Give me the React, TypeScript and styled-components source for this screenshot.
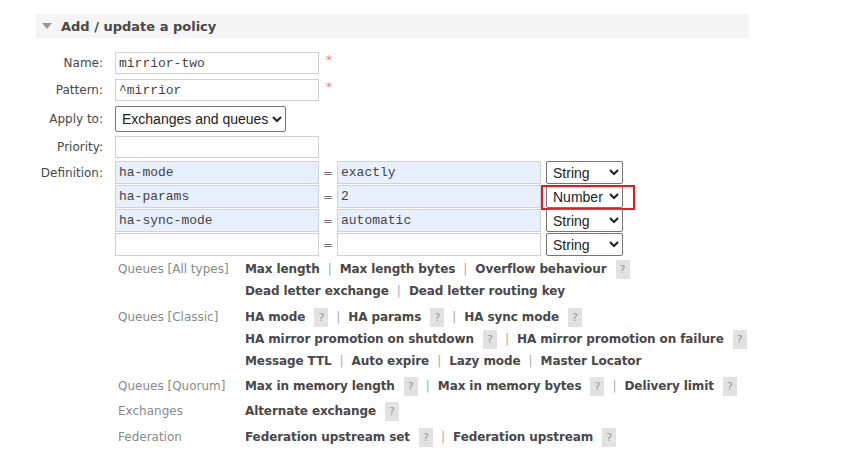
import React from "react";
import styled, { createGlobalStyle } from "styled-components";

const Global = createGlobalStyle`
  html, body { margin: 0; padding: 0; background: #fff; }
  body { font-family: "DejaVu Sans", Verdana, sans-serif; font-size: 12px; color: #484848; }
`;

const Page = styled.div`
  width: 849px;
  height: 450px;
  padding: 14px 0 0 36px;
  box-sizing: border-box;
  overflow: hidden;
`;

const Section = styled.div`
  width: 713px;
`;

const Header = styled.div`
  height: 24px;
  background: #f5f5f5;
  display: flex;
  align-items: center;
  padding-left: 6px;
  gap: 9px;
  font-weight: bold;
  font-size: 13px;
  color: #484848;
`;

const Triangle = styled.span`
  width: 0;
  height: 0;
  border-left: 5px solid transparent;
  border-right: 5px solid transparent;
  border-top: 6px solid #999;
`;

const Form = styled.div`
  display: grid;
  grid-template-columns: 67px auto;
  column-gap: 12px;
  margin-top: 14px;
  align-items: start;
`;

const Label = styled.div<{ $h?: number }>`
  text-align: right;
  height: ${(p) => p.$h ?? 22}px;
  line-height: ${(p) => (p.$h ?? 22) + 1}px;
  font-size: 12px;
  color: #484848;
  white-space: nowrap;
`;

const Field = styled.div<{ $mb?: number }>`
  display: flex;
  align-items: center;
  gap: 6px;
  margin-bottom: ${(p) => p.$mb ?? 5}px;
`;

const TextInput = styled.input<{ $filled?: boolean; $w?: number }>`
  box-sizing: border-box;
  width: ${(p) => p.$w ?? 204}px;
  height: 22px;
  margin: 0;
  padding: 0 3px;
  border: 1px solid ${(p) => (p.$filled ? "#ccd3dd" : "#d0d0d0")};
  background: ${(p) => (p.$filled ? "#e8f0fe" : "#fff")};
  font-family: "Liberation Mono", "Courier New", monospace;
  font-size: 13px;
  color: #444;
  outline: none;
`;

const Star = styled.span`
  color: #f08080;
  font-size: 12px;
  margin-left: 1px;
  align-self: flex-start;
  margin-top: 1px;
`;

const Select = styled.select<{ $w?: number; $h?: number }>`
  box-sizing: border-box;
  width: ${(p) => (p.$w ? `${p.$w}px` : "auto")};
  height: ${(p) => p.$h ?? 23}px;
  margin: 0;
  padding: 0 0 0 2px;
  border: 1px solid #767676;
  border-radius: 2px;
  background: #fff;
  font-family: "Liberation Sans", Arial, sans-serif;
  font-size: 14px;
  color: #222;
`;

const DefRows = styled.div`
  display: flex;
  flex-direction: column;
  gap: 1px;
`;

const DefRow = styled.div`
  display: flex;
  align-items: center;
  height: 23px;
`;

const Eq = styled.span`
  width: 18px;
  text-align: center;
  font-size: 12px;
  color: #777;
`;

const TypeWrap = styled.div`
  position: relative;
  margin-left: 5px;
  display: flex;
`;

const RedBox = styled.div`
  position: absolute;
  left: -5px;
  top: 0px;
  width: 94px;
  height: 25px;
  border: 2px solid #e8191b;
  box-sizing: border-box;
  pointer-events: none;
`;

const Help = styled.div`
  margin: 2px 0 0 82px;
  display: grid;
  grid-template-columns: 127px auto;
  align-items: start;
`;

const Cat = styled.div<{ $mt?: number }>`
  color: #8a8a8a;
  font-size: 12px;
  line-height: 22px;
  margin-top: ${(p) => p.$mt ?? 0}px;
  white-space: nowrap;
`;

const Links = styled.div<{ $mt?: number }>`
  margin-top: ${(p) => p.$mt ?? 0}px;
  display: flex;
  flex-direction: column;
`;

const LinkLine = styled.div`
  display: flex;
  align-items: center;
  height: 22px;
  white-space: nowrap;
`;

const Link = styled.span`
  font-weight: bold;
  color: #484848;
  font-size: 12px;
  letter-spacing: -0.1px;
`;

const Sep = styled.span`
  color: #aaa;
  margin: 0 8px;
`;

const Q = styled.span`
  display: inline-block;
  width: 14px;
  height: 19px;
  line-height: 19px;
  text-align: center;
  background: #e2e2e2;
  color: #999;
  font-size: 11px;
  margin-left: 9px;
`;

type L = { t: string; q?: boolean };

const Line = ({ items }: { items: L[] }) => (
  <LinkLine>
    {items.map((it, i) => (
      <React.Fragment key={i}>
        {i > 0 && <Sep>|</Sep>}
        <Link>{it.t}</Link>
        {it.q && <Q>?</Q>}
      </React.Fragment>
    ))}
  </LinkLine>
);

const defs = [
  { k: "ha-mode", v: "exactly", t: "String" },
  { k: "ha-params", v: "2", t: "Number" },
  { k: "ha-sync-mode", v: "automatic", t: "String" },
  { k: "", v: "", t: "String" },
];

export default function App() {
  return (
    <Page>
      <Global />
      <Section>
        <Header>
          <Triangle />
          <span>Add / update a policy</span>
        </Header>
        <Form>
          <Label>Name:</Label>
          <Field>
            <TextInput $filled={false} defaultValue="mirrior-two" />
            <Star>*</Star>
          </Field>
          <Label>Pattern:</Label>
          <Field>
            <TextInput defaultValue="^mirrior" />
            <Star>*</Star>
          </Field>
          <Label $h={26}>Apply to:</Label>
          <Field $mb={4}>
            <Select $h={26} defaultValue="eq">
              <option value="eq">Exchanges and queues</option>
              <option value="e">Exchanges</option>
              <option value="q">Queues</option>
            </Select>
          </Field>
          <Label>Priority:</Label>
          <Field $mb={3}>
            <TextInput />
          </Field>
          <Label $h={23}>Definition:</Label>
          <DefRows>
            {defs.map((d, i) => (
              <DefRow key={i}>
                <TextInput $filled={!!d.k} defaultValue={d.k} style={{ height: 23 }} />
                <Eq>=</Eq>
                <TextInput $filled={!!d.v} defaultValue={d.v} style={{ height: 23 }} />
                <TypeWrap>
                  <Select $w={77} defaultValue={d.t}>
                    <option>String</option>
                    <option>Number</option>
                    <option>Boolean</option>
                    <option>List</option>
                  </Select>
                  {d.t === "Number" && <RedBox />}
                </TypeWrap>
              </DefRow>
            ))}
          </DefRows>
        </Form>
        <Help>
          <Cat>Queues [All types]</Cat>
          <Links>
            <Line items={[{ t: "Max length" }, { t: "Max length bytes" }, { t: "Overflow behaviour", q: true }]} />
            <Line items={[{ t: "Dead letter exchange" }, { t: "Dead letter routing key" }]} />
          </Links>
          <Cat $mt={4}>Queues [Classic]</Cat>
          <Links $mt={4}>
            <Line items={[{ t: "HA mode", q: true }, { t: "HA params", q: true }, { t: "HA sync mode", q: true }]} />
            <Line items={[{ t: "HA mirror promotion on shutdown", q: true }, { t: "HA mirror promotion on failure", q: true }]} />
            <Line items={[{ t: "Message TTL" }, { t: "Auto expire" }, { t: "Lazy mode" }, { t: "Master Locator" }]} />
          </Links>
          <Cat $mt={3}>Queues [Quorum]</Cat>
          <Links $mt={3}>
            <Line items={[{ t: "Max in memory length", q: true }, { t: "Max in memory bytes", q: true }, { t: "Delivery limit", q: true }]} />
          </Links>
          <Cat $mt={3}>Exchanges</Cat>
          <Links $mt={3}>
            <Line items={[{ t: "Alternate exchange", q: true }]} />
          </Links>
          <Cat $mt={4}>Federation</Cat>
          <Links $mt={4}>
            <Line items={[{ t: "Federation upstream set", q: true }, { t: "Federation upstream", q: true }]} />
          </Links>
        </Help>
      </Section>
    </Page>
  );
}
